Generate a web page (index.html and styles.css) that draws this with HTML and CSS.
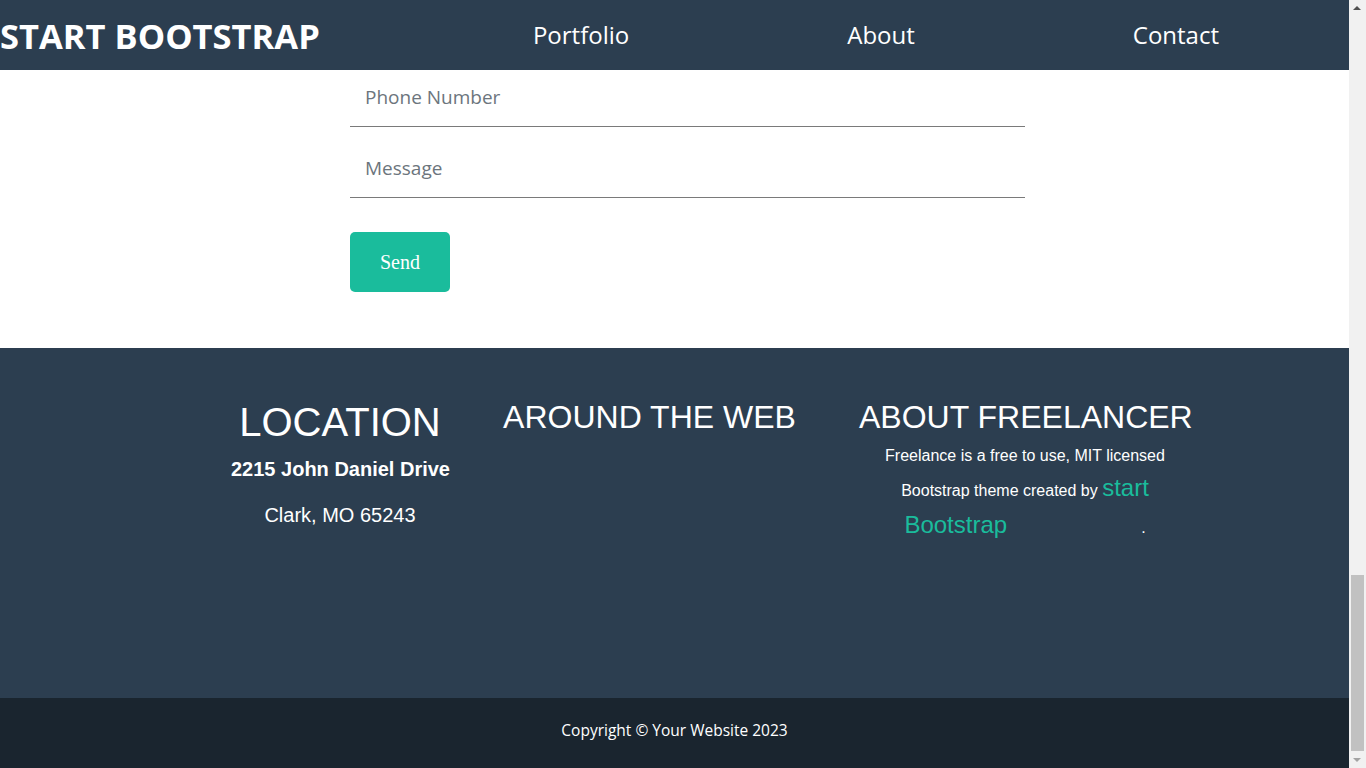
FILE: index.html
```html
<!DOCTYPE html>
<html lang="en">
<head>
<meta charset="utf-8">
<title>Freelancer - Start Bootstrap</title>
<link rel="stylesheet" href="styles.css">
</head>
<body>
<nav class="navbar">
  <a class="brand" href="#">START BOOTSTRAP</a>
  <ul class="nav-links">
    <li><a href="#">Portfolio</a></li>
    <li><a href="#">About</a></li>
    <li><a href="#">Contact</a></li>
  </ul>
</nav>

<section class="contact">
  <form class="contact-form">
    <input class="field" type="tel" placeholder="Phone Number">
    <input class="field" type="text" placeholder="Message">
    <button class="send" type="button">Send</button>
  </form>
</section>

<footer class="footer">
  <div class="footer-cols">
    <div class="col col-location">
      <h2 class="loc-title">LOCATION</h2>
      <p class="addr">2215 John Daniel Drive</p>
      <p class="city">Clark, MO 65243</p>
    </div>
    <div class="col col-web">
      <h2 class="col-title">AROUND THE WEB</h2>
    </div>
    <div class="col col-about">
      <h2 class="col-title">ABOUT FREELANCER</h2>
      <p class="about-text">Freelance is a free to use, MIT licensed Bootstrap theme created by <a class="sb-link" href="#">start Bootstrap</a><span class="dot">.</span></p>
    </div>
  </div>
</footer>

<div class="copyright">Copyright © Your Website 2023</div>

<div class="scrollbar" aria-hidden="true">
  <span class="sb-arrow sb-up"></span>
  <span class="sb-thumb"></span>
  <span class="sb-arrow sb-down"></span>
</div>
</body>
</html>
```
FILE: styles.css
```css
body {
  margin: 0 17px 0 0;
  font-family: "Open Sans", "Noto Sans", sans-serif;
  background: #ffffff;
}

.navbar {
  position: fixed;
  top: 0;
  left: 0;
  right: 17px;
  height: 70px;
  background: #2c3e50;
  display: flex;
  align-items: center;
  z-index: 10;
}

.brand {
  color: #ffffff;
  text-decoration: none;
  font-weight: 700;
  font-size: 34.5px;
  line-height: 1;
  padding-top: 2px;
}

.nav-links {
  list-style: none;
  margin: 0 130px 0 auto;
  padding: 2px 0 0;
  display: flex;
  gap: 218px;
}

.nav-links a {
  color: #ffffff;
  text-decoration: none;
  font-size: 24px;
  line-height: 1;
}

.contact {
  padding: 56px 0 56px;
}

.contact-form {
  width: 675px;
  margin-left: 350px;
  display: flex;
  flex-direction: column;
  align-items: flex-start;
}

.field {
  box-sizing: border-box;
  width: 100%;
  height: 71px;
  border: none;
  border-bottom: 1px solid #7a7a7a;
  padding: 12px 15px 0;
  font-family: "Open Sans", "Noto Sans", sans-serif;
  font-size: 19px;
  color: #212529;
  outline: none;
  background: transparent;
}

.field::placeholder {
  color: #6c757d;
}

.send {
  margin-top: 34px;
  width: 100px;
  height: 60px;
  border: none;
  border-radius: 5px;
  background: #1abc9c;
  color: #ffffff;
  font-family: "Liberation Serif", "Times New Roman", serif;
  font-size: 20px;
  padding: 0;
}

.footer {
  background: #2c3e50;
  height: 350px;
  box-sizing: border-box;
  padding-top: 50px;
  color: #ffffff;
  font-family: "Liberation Sans", Arial, sans-serif;
}

.footer-cols {
  display: flex;
  align-items: flex-start;
  padding-left: 231px;
}

.col {
  text-align: center;
}

.col-location {
  width: 218px;
}

.col-web {
  width: 293px;
  margin-left: 54px;
}

.col-about {
  width: 332px;
  margin-left: 63px;
}

.loc-title {
  margin: 0;
  font-size: 40px;
  font-weight: 400;
  line-height: 48px;
  white-space: nowrap;
}

.col-title {
  margin: 0;
  font-size: 32px;
  font-weight: 400;
  line-height: 1.2;
  white-space: nowrap;
}

.addr {
  margin: 11px 0 0;
  font-size: 20px;
  font-weight: 700;
  line-height: 24px;
  white-space: nowrap;
}

.city {
  margin: 22px 0 0;
  font-size: 20px;
  line-height: 24px;
}

.about-text {
  margin: 8px 0 0;
  font-size: 16px;
  line-height: 1.55;
}

.sb-link {
  color: #1abc9c;
  text-decoration: none;
  font-size: 24px;
}

.dot {
  margin-left: 134px;
}

.copyright {
  height: 70px;
  box-sizing: border-box;
  padding-bottom: 6px;
  background: #1a252f;
  color: #ffffff;
  display: flex;
  align-items: center;
  justify-content: center;
  font-size: 15.5px;
}

.scrollbar {
  position: fixed;
  top: 0;
  right: 0;
  width: 17px;
  height: 100%;
  background: #f1f1f1;
  z-index: 20;
}

.sb-thumb {
  position: absolute;
  left: 2px;
  width: 13px;
  top: 575px;
  height: 176px;
  background: #c1c1c1;
}

.sb-arrow {
  position: absolute;
  left: 4px;
  width: 0;
  height: 0;
  border-left: 4px solid transparent;
  border-right: 4px solid transparent;
}

.sb-up {
  top: 6px;
  border-bottom: 4px solid #505050;
}

.sb-down {
  bottom: 6px;
  border-top: 4px solid #a3a3a3;
}
```
